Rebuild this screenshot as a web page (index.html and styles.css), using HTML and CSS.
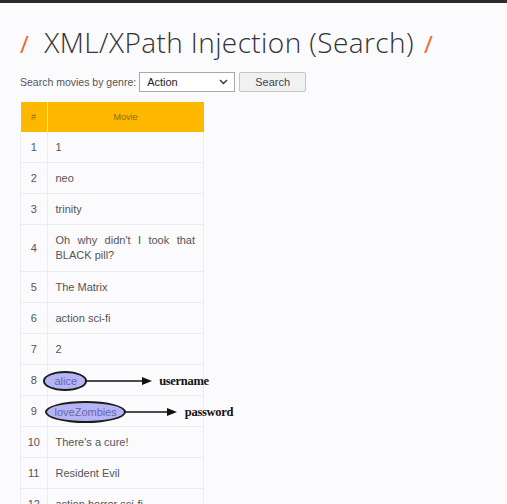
FILE: index.html
```html
<!DOCTYPE html>
<html>
<head>
<meta charset="utf-8">
<link rel="stylesheet" href="styles.css">
</head>
<body>
<div class="topbar"></div>
<main class="page">
  <h1 class="title"><span class="slash s1">/</span>XML/XPath Injection (Search)<span class="slash s2">/</span></h1>
  <form class="search">
    <label class="lbl">Search movies by genre:</label>
    <div class="select"><span>Action</span><svg width="9" height="6" viewBox="0 0 9 6"><path d="M1 1 L4.5 4.5 L8 1" fill="none" stroke="#333" stroke-width="1.4"/></svg></div>
    <button type="button" class="btn">Search</button>
  </form>
  <table class="movies">
    <thead>
      <tr><th class="num">#</th><th>Movie</th></tr>
    </thead>
    <tbody>
      <tr class="first"><td class="num">1</td><td>1</td></tr>
      <tr><td class="num">2</td><td>neo</td></tr>
      <tr><td class="num">3</td><td>trinity</td></tr>
      <tr><td class="num">4</td><td class="just">Oh why didn't I took that BLACK pill?</td></tr>
      <tr><td class="num">5</td><td>The Matrix</td></tr>
      <tr><td class="num">6</td><td>action sci-fi</td></tr>
      <tr><td class="num">7</td><td>2</td></tr>
      <tr><td class="num">8</td><td><span class="mark m1">alice<span class="note n1"><svg width="68" height="10" viewBox="0 0 68 10"><line x1="0" y1="5" x2="60" y2="5" stroke="#111" stroke-width="1.6"/><path d="M57 1 L67 5 L57 9 Z" fill="#111"/></svg><b>username</b></span></span></td></tr>
      <tr><td class="num">9</td><td><span class="mark m2">loveZombies<span class="note n2"><svg width="54" height="10" viewBox="0 0 54 10"><line x1="0" y1="5" x2="46" y2="5" stroke="#111" stroke-width="1.6"/><path d="M43 1 L53 5 L43 9 Z" fill="#111"/></svg><b>password</b></span></span></td></tr>
      <tr><td class="num">10</td><td>There's a cure!</td></tr>
      <tr><td class="num">11</td><td>Resident Evil</td></tr>
      <tr><td class="num">12</td><td>action horror sci-fi</td></tr>
    </tbody>
  </table>
</main>
</body>
</html>
```

FILE: styles.css
```css
html, body {
  margin: 0;
  padding: 0;
  background: #fbfafc;
  font-family: "Liberation Sans", Arial, sans-serif;
  overflow: hidden;
}
.topbar {
  height: 3px;
  background: #2b2b2b;
}
.page {
  padding: 0 20px;
}
.title {
  margin: 22px 0 0 0;
  height: 42px;
  font-family: "Open Sans", sans-serif;
  font-weight: 300;
  font-size: 28px;
  line-height: 34px;
  color: #333;
  letter-spacing: 0.4px;
  white-space: nowrap;
}
.slash {
  color: #f0652a;
  font-weight: 400;
  font-size: 24px;
}
.s1 { margin-right: 15px; }
.s2 { margin-left: 10px; }
.search {
  display: flex;
  align-items: center;
  gap: 3px;
  height: 20px;
  margin-top: 5px;
}
.lbl {
  font-size: 10.5px;
  color: #555;
}
.select {
  box-sizing: border-box;
  width: 96px;
  height: 20px;
  border: 1px solid #a8a8a8;
  background: #fff;
  display: flex;
  align-items: center;
  justify-content: space-between;
  padding: 0 6px 0 7px;
  font-size: 11px;
  color: #222;
}
.btn {
  box-sizing: border-box;
  width: 67px;
  height: 20px;
  margin-left: 1px;
  border: 1px solid #c4c4c4;
  border-radius: 2px;
  background: #f1f1f1;
  font-family: "Liberation Sans", Arial, sans-serif;
  font-size: 11px;
  color: #444;
  padding: 0;
}
.movies {
  margin-top: 10px;
  width: 184px;
  border-collapse: collapse;
  font-size: 11px;
  color: #555;
}
.movies th {
  background: #ffb800;
  height: 30px;
  padding: 0;
  font-weight: normal;
  font-size: 9px;
  color: #8a6a14;
  border-left: 1px solid #ffe7a0;
}
.movies th.num {
  border-left: none;
  width: 26px;
}
.movies td {
  padding: 8px 8px;
  line-height: 14px;
  border-top: 1px solid #ececec;
  border-left: 1px solid #ececec;
  border-right: 1px solid #ececec;
  vertical-align: middle;
}
.movies tr.first td {
  border-top: none;
}
.movies td.num {
  text-align: center;
  padding: 8px 0;
}
.movies td.just {
  text-align: justify;
  line-height: 15px;
  padding: 8px 8px;
}
.mark {
  position: relative;
  display: inline-block;
  vertical-align: middle;
  background: #b5b5f5;
  border: 2px solid #1c1c1c;
  border-radius: 50%;
  color: #6565b0;
  line-height: 14px;
}
.m1 {
  margin: -4px 0 -4px -13px;
  padding: 1px 8px 1px 10px;
}
.m2 {
  margin: -6px 0 -6px -11px;
  padding: 2px 7px 2px 8px;
}
.note {
  position: absolute;
  left: 100%;
  top: 50%;
  transform: translateY(-50%);
  display: flex;
  align-items: center;
  white-space: nowrap;
}
.note b {
  font-family: "Liberation Serif", "Times New Roman", serif;
  font-size: 12.5px;
  color: #111;
  letter-spacing: -0.3px;
}
.n1 b { margin-left: 6px; }
.n2 b { margin-left: 7px; }
```
